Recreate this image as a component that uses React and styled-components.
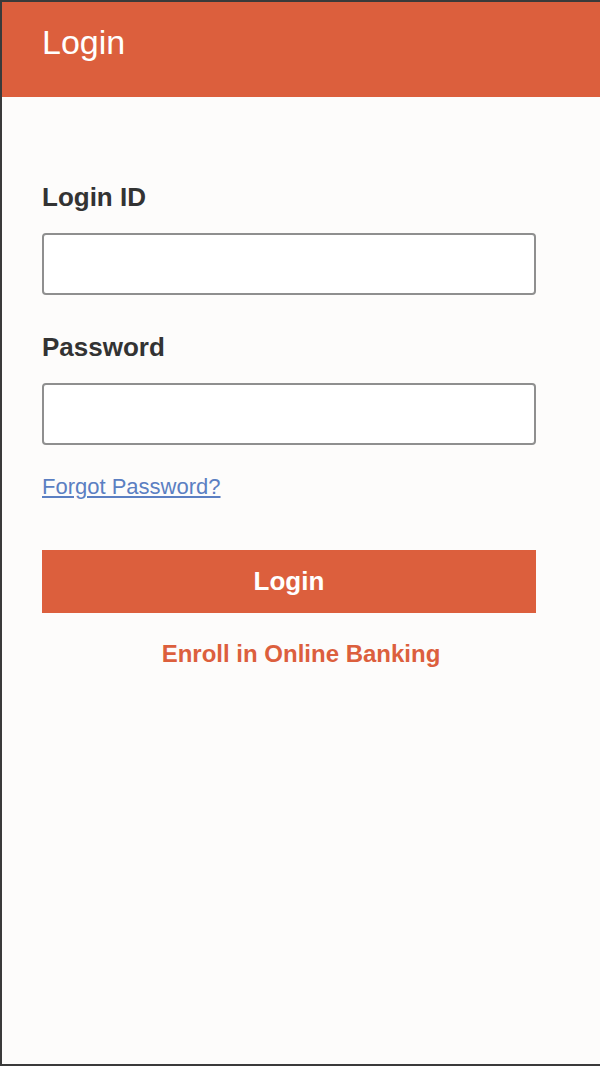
import React from "react";
import styled, { createGlobalStyle } from "styled-components";

const GlobalStyle = createGlobalStyle`
  * { box-sizing: border-box; }
  html, body { margin: 0; padding: 0; background: #fdfcfb; }
  body { font-family: "Liberation Sans", Arial, Helvetica, sans-serif; }
`;

const Frame = styled.div`
  min-height: 100vh;
  display: flex;
  flex-direction: column;
  background: #fdfcfb;
  border-top: 2px solid #3a3a3a;
  border-left: 2px solid #3a3a3a;
  border-bottom: 2px solid #3a3a3a;
`;

const Header = styled.header`
  height: 95px;
  background: #dc5f3d;
  padding: 20px 40px 0;
`;

const Title = styled.h1`
  margin: 0;
  font-size: 34px;
  line-height: 40px;
  font-weight: 400;
  color: #ffffff;
`;

const Form = styled.form`
  display: flex;
  flex-direction: column;
  width: 494px;
  margin-left: 40px;
  padding-top: 85px;
`;

const Field = styled.div`
  display: flex;
  flex-direction: column;
  margin-bottom: ${(p) => p.$gap || 0}px;
`;

const Label = styled.label`
  font-size: 26px;
  line-height: 30px;
  font-weight: 700;
  color: #333333;
  margin-bottom: 21px;
`;

const Input = styled.input`
  height: 62px;
  width: 100%;
  border: 2px solid #8f8f8f;
  border-radius: 4px;
  background: #ffffff;
  font-size: 22px;
  padding: 0 14px;
  font-family: inherit;
  outline: none;
`;

const Link = styled.a`
  align-self: flex-start;
  margin-top: 29px;
  font-size: 22px;
  line-height: 26px;
  color: #5b7fc2;
  text-decoration: underline;
  text-underline-offset: 2px;
  cursor: pointer;
`;

const Button = styled.button`
  margin-top: 50px;
  height: 63px;
  width: 100%;
  border: none;
  background: #dc5f3d;
  color: #ffffff;
  font-family: inherit;
  font-size: 26px;
  font-weight: 700;
  display: flex;
  align-items: center;
  justify-content: center;
  cursor: pointer;
`;

const Enroll = styled.a`
  margin-top: 27px;
  padding-left: 24px;
  text-align: center;
  font-size: 24px;
  line-height: 28px;
  font-weight: 700;
  color: #dc5f3d;
  text-decoration: none;
  cursor: pointer;
`;

export default function App() {
  return (
    <>
      <GlobalStyle />
      <Frame>
        <Header>
          <Title>Login</Title>
        </Header>
        <Form onSubmit={(e) => e.preventDefault()}>
          <Field $gap={37}>
            <Label htmlFor="loginId">Login ID</Label>
            <Input id="loginId" type="text" />
          </Field>
          <Field>
            <Label htmlFor="password">Password</Label>
            <Input id="password" type="password" />
          </Field>
          <Link>Forgot Password?</Link>
          <Button type="submit">Login</Button>
          <Enroll>Enroll in Online Banking</Enroll>
        </Form>
      </Frame>
    </>
  );
}
